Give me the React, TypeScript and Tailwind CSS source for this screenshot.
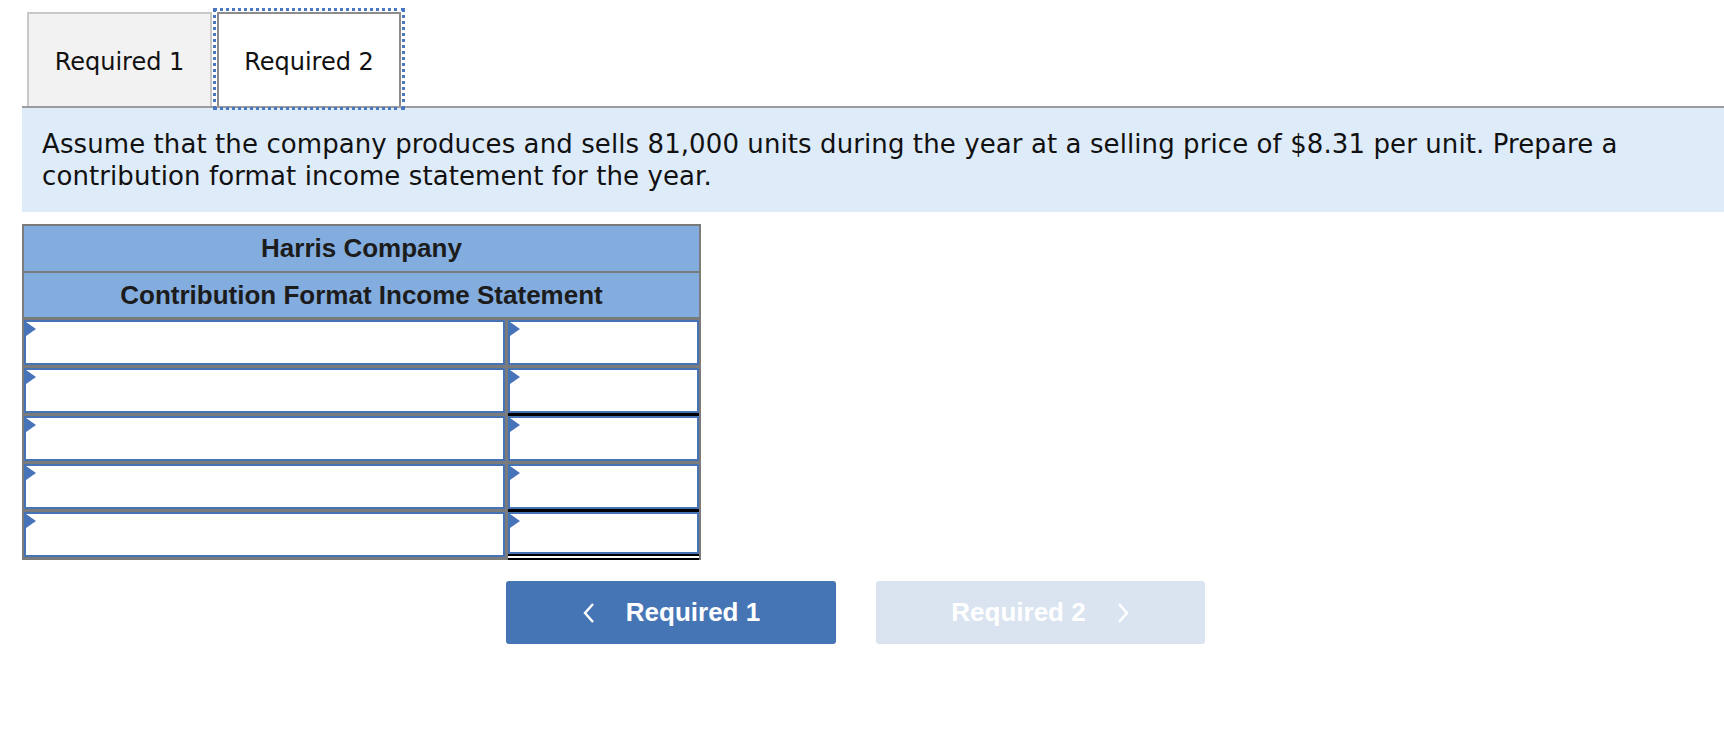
import React from 'react';

const verdana = { fontFamily: '"DejaVu Sans", Verdana, sans-serif' };
const arial = { fontFamily: '"Liberation Sans", Arial, Helvetica, sans-serif' };

const Marker = () => (
  <svg className="absolute left-0 top-0" width="11" height="14" viewBox="0 0 11 14">
    <polygon points="0,0 10,7 0,14" fill="#4774b8" />
  </svg>
);

const Cell = ({ wide }: { wide?: boolean }) => (
  <div
    className={
      'relative h-[45px] border-2 border-[#4673b6] bg-white ' + (wide ? 'w-[481px]' : 'flex-1')
    }
  >
    <Marker />
  </div>
);

// gap under the right cell: plain grid line, single underline, or double underline
const rows: Array<'none' | 'single' | 'double'> = ['none', 'single', 'none', 'single', 'double'];

export default function App() {
  return (
    <div className="min-h-screen bg-white pl-[22px] pt-[12px]" style={verdana}>
      {/* tabs */}
      <div className="flex h-[96px] items-end border-b-2 border-[#9c9c9c] pl-[5px]">
        <div className="flex h-[94px] w-[185px] items-center justify-center border-2 border-b-0 border-[#c8c8c8] bg-[#f2f2f2] pt-[4px] text-[24px] text-[#111]">
          Required 1
        </div>
        <div className="ml-[5px] flex h-[94px] w-[184px] items-center justify-center border-2 border-b-0 border-[#8c8c8c] bg-white pt-[4px] text-[24px] text-[#111] outline-[3px] outline-offset-[1px] outline-dotted outline-[#4a78c0]">
          Required 2
        </div>
      </div>

      {/* prompt */}
      <div className="bg-[#deebf8] pb-[20px] pl-[20px] pr-[20px] pt-[20px] text-[26px] leading-[32px] tracking-[0.09px] text-[#111]">
        Assume that the company produces and sells 81,000 units during the year at a selling price of $8.31 per unit. Prepare a
        <br />
        contribution format income statement for the year.
      </div>

      {/* statement */}
      <div className="mt-[12px] w-[679px] border-x-2 border-t-2 border-[#7b7b7b] bg-[#7b7b7b]" style={arial}>
        <div className="flex h-[45px] items-center justify-center bg-[#83addf] text-[26px] font-bold text-[#1c1c1c]">
          Harris Company
        </div>
        <div className="mt-[2px] flex h-[44px] items-center justify-center bg-[#83addf] text-[26px] font-bold text-[#1c1c1c]">
          Contribution Format Income Statement
        </div>
        <div className="h-[3px]" />
        {rows.map((u, i) => (
          <div key={i} className="flex gap-[3px]">
            <div className="flex flex-col">
              <Cell wide />
              <div className="h-[3px]" />
            </div>
            <div className="flex flex-1 flex-col">
              <Cell />
              {u === 'none' && <div className="h-[3px]" />}
              {u === 'single' && <div className="h-[3px] bg-black" />}
              {u === 'double' && <div className="h-[6px] border-y-2 border-black bg-white" />}
            </div>
          </div>
        ))}
      </div>

      {/* navigation */}
      <div className="ml-[484px] mt-[21px] flex gap-[40px]" style={arial}>
        <button className="flex h-[63px] w-[330px] items-center justify-center gap-[30px] rounded-[3px] bg-[#4675b6] text-[26px] font-bold text-white">
          <svg width="14" height="22" viewBox="0 0 14 22">
            <polyline points="11,2 3,11 11,20" fill="none" stroke="white" strokeWidth="2.4" />
          </svg>
          <span>Required 1</span>
        </button>
        <button className="flex h-[63px] w-[329px] items-center justify-center gap-[30px] rounded-[3px] bg-[#dae4f0] text-[26px] font-bold text-white">
          <span>Required 2</span>
          <svg width="14" height="22" viewBox="0 0 14 22">
            <polyline points="3,2 11,11 3,20" fill="none" stroke="white" strokeWidth="2.4" />
          </svg>
        </button>
      </div>
    </div>
  );
}
